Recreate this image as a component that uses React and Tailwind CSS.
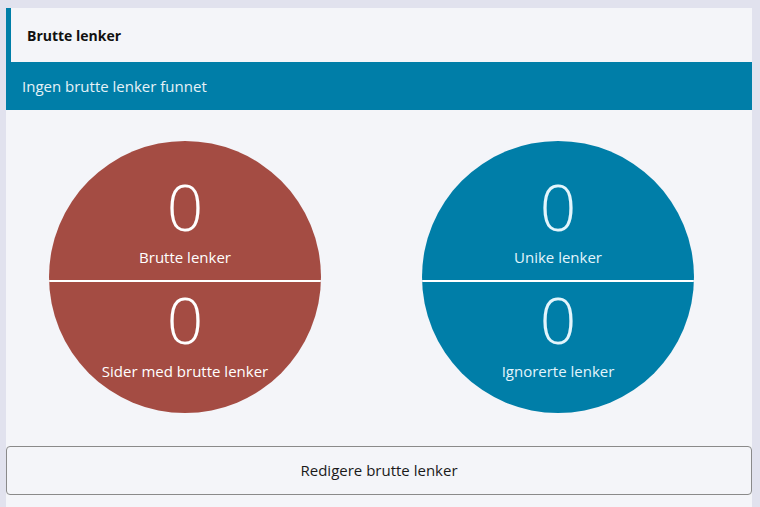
export default function App() {
  const circles = [
    { color: "bg-[#a44c43]", text: "text-white", top: "Brutte lenker", bottom: "Sider med brutte lenker" },
    { color: "bg-[#007ea8]", text: "text-[#e3f5fc]", top: "Unike lenker", bottom: "Ignorerte lenker" },
  ];

  return (
    <div className="min-h-[507px] bg-[#e1e2ee] px-[6px] pt-[8px] pr-[8px] font-['Open_Sans',sans-serif]">
      <div className="bg-[#f4f5f9]">
        <div className="flex h-[54px] items-center border-l-[5px] border-[#007ea8] pl-[16px]">
          <h2 className="text-[14px] font-bold text-[#111]">Brutte lenker</h2>
        </div>
        <div className="flex h-[48px] items-center bg-[#007ea8] px-[16px] text-[15px] text-[#e6f2f7]">
          Ingen brutte lenker funnet
        </div>

        <div className="flex gap-[101px] pl-[43px] pt-[31px]">
          {circles.map((c) => (
            <div
              key={c.top}
              className={`flex h-[272px] w-[272px] flex-col overflow-hidden rounded-full ${c.color} ${c.text}`}
            >
              <div className="flex h-[139px] flex-col items-center justify-end pb-[15px]">
                <span className="text-[64px] font-light leading-none">0</span>
                <span className="mt-[11px] text-[15px] leading-none">{c.top}</span>
              </div>
              <div className="h-[2px] bg-white" />
              <div className="flex flex-1 flex-col items-center pt-[6px]">
                <span className="text-[64px] font-light leading-none">0</span>
                <span className="mt-[12px] text-[15px] leading-none">{c.bottom}</span>
              </div>
            </div>
          ))}
        </div>

        <div className="pt-[33px] pb-[13px]">
          <button className="h-[49px] w-full rounded-[4px] border border-[#8a8a8a] bg-[#f4f5f9] text-[15px] text-[#1a1a1a]">
            Redigere brutte lenker
          </button>
        </div>
      </div>
    </div>
  );
}
